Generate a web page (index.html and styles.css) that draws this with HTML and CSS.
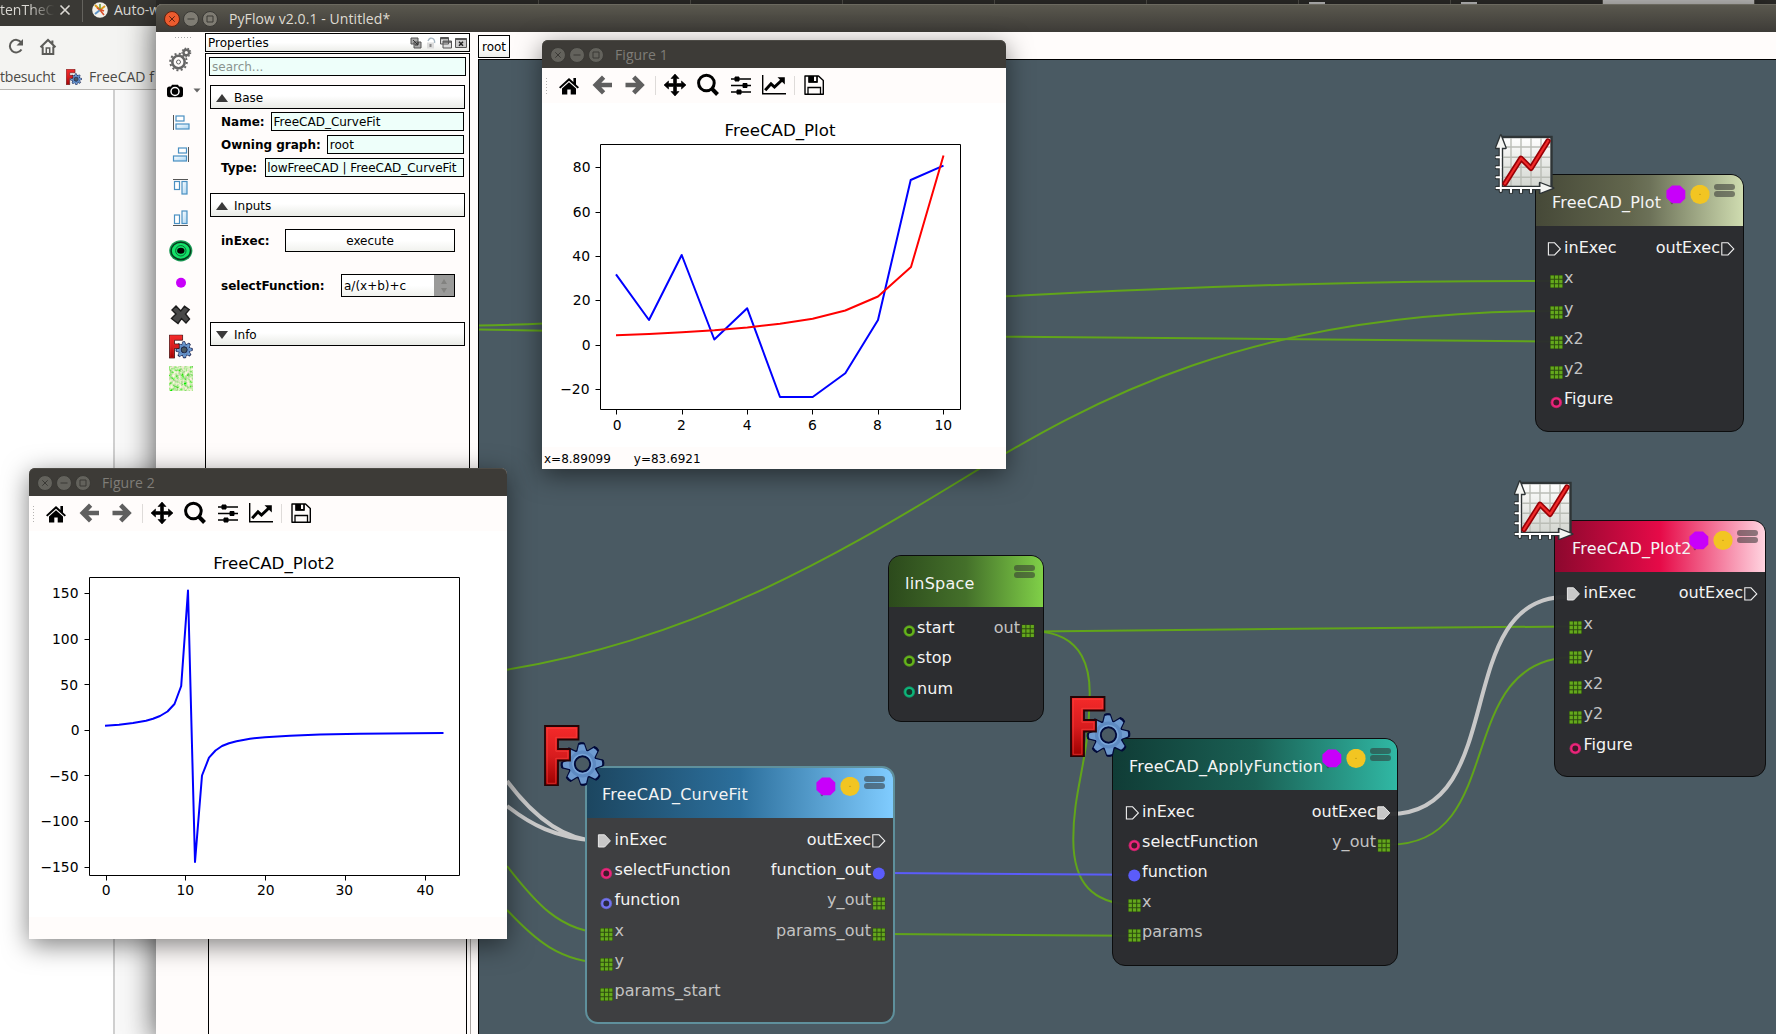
FILE: index.html
```html
<!DOCTYPE html>
<html lang="en">
<head>
<meta charset="utf-8">
<title>PyFlow v2.0.1 - Untitled*</title>
<link rel="stylesheet" href="styles.css">
</head>
<body>
<svg class="defs" width="0" height="0" aria-hidden="true">
  <defs>
    <linearGradient id="redF" x1="0" y1="0" x2="0" y2="1"><stop offset="0" stop-color="#f52a2a"/><stop offset=".5" stop-color="#d81c1e"/><stop offset="1" stop-color="#9c0000"/></linearGradient>
    <linearGradient id="paper" x1="0" y1="0" x2="0" y2="1"><stop offset="0" stop-color="#fff"/><stop offset="1" stop-color="#d2d5cf"/></linearGradient>
    <linearGradient id="bar" x1="0" y1="0" x2="1" y2="1"><stop offset="0" stop-color="#fff"/><stop offset="1" stop-color="#a8d4f2"/></linearGradient>
    <filter id="speckle" x="0" y="0" width="1" height="1">
      <feTurbulence type="fractalNoise" baseFrequency=".35" numOctaves="2" seed="4"/>
      <feColorMatrix values="1.9 0 0 0 -.4  .3 .5 0 0 .42  1.5 0 0 0 -.35  0 0 0 0 1"/>
    </filter>
    <g id="tooth"><path d="M-6-12-3-22.3Q0-23.3 3-22.3L6-12Z"/></g>
    <g id="teeth"><use href="#tooth"/><use href="#tooth" transform="rotate(45)"/><use href="#tooth" transform="rotate(90)"/><use href="#tooth" transform="rotate(135)"/><use href="#tooth" transform="rotate(180)"/><use href="#tooth" transform="rotate(225)"/><use href="#tooth" transform="rotate(270)"/><use href="#tooth" transform="rotate(315)"/></g>
    <symbol id="freecad" viewBox="0 0 61 61">
      <g transform="translate(38.5 39) rotate(-3) scale(.94)">
        <use href="#teeth" fill="#00093a" stroke="#00093a" stroke-width="1"/>
        <circle r="11.8" fill="none" stroke="#00093a" stroke-width="8.5"/>
        <use href="#teeth" fill="#6f9bd0" transform="scale(.92)"/>
        <circle r="11.6" fill="none" stroke="#5e8ac2" stroke-width="5.6"/>
        <circle r="10.2" fill="none" stroke="#7ba6d8" stroke-width="1.5"/>
        <circle r="8.1" fill="#4a5a63" stroke="#00093a" stroke-width="1.8"/>
      </g>
      <path d="M1 1H34.5V14.5H14V24H26V35.5H14V60.5H1Z" fill="url(#redF)" stroke="#250406" stroke-width="1.8"/>
      <path d="M3.2 3.2H32.3V12.3H11.8V26.2H23.8V33.3H11.8V58.3H3.2Z" fill="none" stroke="#ff4a46" stroke-opacity=".55" stroke-width="1"/>
    </symbol>
    <symbol id="chart" viewBox="0 0 60 60">
      <rect x="7" y="3" width="49.5" height="51" fill="url(#paper)" stroke="#2e3436" stroke-width="2.4"/>
      <path d="M16 4V53M26 4V53M36 4V53M46 4V53M8 13H55M8 23.3H55M8 33.3H55M8 43.3H55" stroke="#babdb6" stroke-width="1.4"/>
      <g fill="none" stroke-linecap="round">
        <path d="M5.8 57V12M1.5 54H46M1.5 23.3H6M1.5 33.3H6M1.5 43.3H6M16 54V58.2M26 54V58.2M36 54V58.2" stroke="#2e3436" stroke-width="4.4"/>
        <path d="M5.8 1.3 1 14H10.6ZM58.3 54 45 49V59Z" fill="#2e3436" stroke="#2e3436" stroke-width="2.4" stroke-linejoin="round"/>
        <path d="M5.8 57V12M1.5 54H46M1.5 23.3H6M1.5 33.3H6M1.5 43.3H6M16 54V58.2M26 54V58.2M36 54V58.2" stroke="#fff" stroke-width="2"/>
      </g>
      <path d="M5.8 2 1.2 13.8H10.4ZM57.5 54 45.500 49.300V58.700Z" fill="#f4f5f2"/>
      <path d="M10 49.5 26 24.3 36 34.3 53 7" fill="none" stroke="#980006" stroke-width="5.4" stroke-linejoin="round" stroke-linecap="round"/>
      <path d="M10 49.5 26 24.3 36 34.3 53 7" fill="none" stroke="#ef2929" stroke-width="2.2" stroke-linejoin="round" stroke-linecap="round"/>
    </symbol>
    <g id="exec"><path d="M1.4 9.8H7.6L13.4 15.9 7.6 22H1.4Z"/></g>
    <g id="array"><rect x="3" y="12.1" width="12.8" height="12.8" fill="#2c4a10"/><path d="M3.6 14.2H15.4M3.6 18.5H15.4M3.6 22.8H15.4" stroke="#64a81c" stroke-width="3.3" stroke-dasharray="3.3 1"/></g>
    <g id="ring"><circle cx="9.3" cy="18.5" r="5.8" fill="currentColor" opacity=".72"/><circle cx="9.3" cy="18.5" r="3.9" fill="#151515" fill-opacity=".75" stroke="currentColor" stroke-width="1.9"/></g>
    <g id="dot"><circle cx="9.3" cy="18.5" r="6" fill="#5b5cfa"/></g>
    <symbol id="tools" viewBox="0 0 69 20">
      <path d="M6 .4H14L19.3 5.4V13.4L14.5 18.3H6L.4 13V5.4Z" fill="#c800fa"/>
      <path d="M4 17.5 6 19.5 7 18Z" fill="#333" opacity=".6"/>
      <circle cx="34" cy="9.4" r="9.6" fill="#f2c522"/><circle cx="34" cy="9.3" r=".6" fill="#a98712"/>
    </symbol>
    <g id="wb-close"><circle cx="8" cy="8" r="7.5"/><path d="M5.3 5.3 10.7 10.7M10.7 5.3 5.3 10.7"/></g>
    <g id="wb-min"><circle cx="8" cy="8" r="7.5"/><path d="M4.5 8H11.5"/></g>
    <g id="wb-max"><circle cx="8" cy="8" r="7.5"/><path d="M5 5H11V11H5Z"/></g>
    <symbol id="i-home" viewBox="0 0 24 24"><path d="M12 5 2 14.2 3.4 15.6 12 7.8 20.6 15.6 22 14.2 19 11.4V5H16.4V9ZM12 9.3 5 15.6V21.5H10.3V16.5H13.7V21.5H19V15.6Z"/></symbol>
    <symbol id="i-back" viewBox="0 0 24 24"><path d="M22 12H6M13.6 4.2 5.8 12 13.6 19.8" fill="none" stroke="#5f5f5f" stroke-width="4.6"/></symbol>
    <symbol id="i-fwd" viewBox="0 0 24 24"><path d="M2.500 12H18.500M10.700 4.2 18.500 12 10.700 19.8" fill="none" stroke="#5f5f5f" stroke-width="4.6"/></symbol>
    <symbol id="i-move" viewBox="0 0 24 24"><path d="M12 1 16 5.5H13.5V10.5H18.5V8L23 12 18.5 16V13.5H13.5V18.5H16L12 23 8 18.5H10.5V13.5H5.5V16L1 12 5.5 8V10.5H10.5V5.5H8Z" stroke="#000" stroke-width=".6"/></symbol>
    <symbol id="i-zoom" viewBox="0 0 24 24"><circle cx="10.4" cy="10" r="7.8" fill="none" stroke="#000" stroke-width="3"/><path d="M15.6 15.4 21.5 21.5" stroke="#000" stroke-width="4"/></symbol>
    <symbol id="i-sliders" viewBox="0 0 24 24"><path d="M2 6H22M2 12.5H22M2 19H22" stroke="#000" stroke-width="1.5"/><path d="M6 4H10V8H6ZM14 10.5H18V14.5H14ZM8 17H12V21H8Z" stroke="#000"/></symbol>
    <symbol id="i-graph" viewBox="0 0 24 24"><path d="M.7 2V20.8H24" fill="none" stroke="#000" stroke-width="1.4"/><path d="M3.2 17.2 9 10.8 12.5 14 20 7" fill="none" stroke="#000" stroke-width="3"/><path d="M15.5 4.3H22.8V11.5Z"/></symbol>
    <symbol id="i-save" viewBox="0 0 24 24"><path d="M3 3H16.5L21.3 7.5V21.2H3Z" fill="none" stroke="#000" stroke-width="1.4" stroke-linejoin="round"/><path d="M6 21V14.5H18.5V21M7 3V9.2H15V3" fill="none" stroke="#000" stroke-width="1.3"/><path d="M6.5 3H12V9.5H6.5ZM14.5 3H15.6V9.5H12V8H14.5Z"/></symbol>
  </defs>
</svg>

<div class="desktop">
  <!-- web browser in the background -->
  <section class="browser">
    <div class="tabs">
      <span class="tab-text fade">tenTheC</span>
      <svg class="tab-x" width="12" height="12"><path d="M1.5 1.5 10.5 10.5M10.5 1.5 1.5 10.5" stroke="#dcdad5" stroke-width="1.6"/></svg>
      <i class="tab-sep"></i>
      <svg class="favicon" width="16" height="16"><circle cx="8" cy="8" r="7.8" fill="#f2f0ea"/><path d="M8 8 3 3M8 8 13 4" stroke="#d99a1c" stroke-width="2"/><path d="M8 8 3 12" stroke="#5d94c8" stroke-width="2"/><path d="M8 8 12 13M5 6 12 9" stroke="#d8502d" stroke-width="1.6"/><path d="M8 2V7" stroke="#6a9d3c" stroke-width="1.6"/></svg>
      <span class="tab-text">Auto-w</span>
    </div>
    <div class="nav">
      <svg width="20" height="20"><path d="M14.300 5.500A6.300 6.300 0 1 0 14.500 12.500" fill="none" stroke="#5b5b58" stroke-width="2"/><path d="M16 2V8.500H9.500Z" fill="#5b5b58"/></svg>
      <svg width="18" height="18"><path d="M1.5 9.2 9 2 16.5 9.2M3.7 8.5V16H14.3V8.5M13.4 6V2.5" fill="none" stroke="#5b5b58" stroke-width="2"/><path d="M7.3 15V10H10.7V15" fill="none" stroke="#5b5b58" stroke-width="1.5"/></svg>
    </div>
    <div class="bookmarks"><span>tbesucht</span><svg width="16" height="16"><use href="#freecad" width="16" height="16"/></svg><span>FreeCAD f</span></div>
    <div class="page"><div class="page-side"></div></div>
  </section>
  <div class="tab-strip">
    <i class="slot"></i><i class="slot"></i><i class="slot"></i><i class="slot"></i><i class="slot"></i><i class="slot"></i><i class="slot fav"></i><i class="slot fav"></i><i class="slot active"></i><i class="slot"></i>
  </div>

  <!-- PyFlow main window -->
  <section class="window main">
    <header class="titlebar">
      <svg class="wb hot" width="16" height="16"><use href="#wb-close"/></svg><svg class="wb" width="16" height="16"><use href="#wb-min"/></svg><svg class="wb" width="16" height="16"><use href="#wb-max"/></svg>
      <span class="caption">PyFlow v2.0.1 - Untitled*</span>
    </header>
    <div class="workspace">
      <nav class="toolbox">
        <i class="grip"></i>
        <svg viewBox="0 0 49 32"><g fill="none" stroke="#666"><circle cx="22.5" cy="19" r="6.2" stroke-width="2.6"/><circle cx="22.5" cy="19" r="8.3" stroke-width="2" stroke-dasharray="2 2.35"/><circle cx="22.5" cy="19" r="2"/><circle cx="30.3" cy="9.5" r="2.8" stroke-width="2.4"/><circle cx="30.3" cy="9.5" r="4.3" stroke-width="1.4" stroke-dasharray="1.5 1.5"/></g></svg>
        <svg viewBox="0 0 49 32"><path d="M13.5 11.5H15L16 9.7H22L23 11.5H24.5Q27 11.5 27 14V20Q27 22.3 24.5 22.3H13.5Q11 22.3 11 20V14Q11 11.5 13.5 11.5Z"/><circle cx="19" cy="16.5" r="4" stroke="#fff" stroke-width="1.5"/><path d="M37.5 13.5H44.5L41 17.5Z" fill="#666"/></svg>
        <svg viewBox="0 0 49 32"><path d="M17.5 8V23" stroke="#555"/><g stroke="#4a90c2" stroke-width="1.2"><rect x="20" y="9" width="8" height="5" fill="#fff"/><rect x="20" y="17" width="13" height="5" fill="url(#bar)"/></g></svg>
        <svg viewBox="0 0 49 32"><path d="M32.5 8V23" stroke="#555"/><g stroke="#4a90c2" stroke-width="1.2"><rect x="22.5" y="9" width="8" height="5" fill="#fff"/><rect x="17.5" y="17" width="13" height="5" fill="url(#bar)"/></g></svg>
        <svg viewBox="0 0 49 32"><path d="M17 8.5H32" stroke="#555"/><g stroke="#4a90c2" stroke-width="1.2"><rect x="18.5" y="10.5" width="5" height="8" fill="#fff"/><rect x="26" y="10.5" width="5" height="12.5" fill="url(#bar)"/></g></svg>
        <svg viewBox="0 0 49 32"><path d="M17 22.5H32" stroke="#555"/><g stroke="#4a90c2" stroke-width="1.2"><rect x="18.5" y="12" width="5" height="8.5" fill="#fff"/><rect x="26" y="8" width="5" height="12.5" fill="url(#bar)"/></g></svg>
        <svg viewBox="0 0 49 32"><ellipse cx="24.8" cy="15.8" rx="11.6" ry="10.6" fill="#1b9c56"/><ellipse cx="24.8" cy="15.8" rx="9.7" ry="8.6" fill="#12e268" stroke="#063a1c" stroke-width="1.5"/><circle cx="24.8" cy="15.8" r="5.2" fill="none" stroke="#0b6b35"/><ellipse cx="24.8" cy="15.8" rx="3.7" ry="3"/></svg>
        <svg viewBox="0 0 49 32"><circle cx="25" cy="15.8" r="5" fill="#c800fa"/></svg>
        <svg viewBox="0 0 49 32"><path d="M20 7 24.8 12 28.5 7.2 33.2 10.7 29.5 15 33.5 20 30 24 25.5 19.5 22 24.5 15.5 19.5 20 15 16 11Z" fill="#484848" stroke="#1c1c1c" stroke-width="1.4"/></svg>
        <svg viewBox="0 0 49 32"><use href="#freecad" x="13" y="3.5" width="24" height="24"/></svg>
        <svg viewBox="0 0 49 32"><rect x="13" y="3.5" width="24" height="24" filter="url(#speckle)"/></svg>
      </nav>
      <aside class="dock">
        <div class="dock-title"><span>Properties</span>
          <svg width="12" height="12"><path d="M1 1H8V7H1ZM4 5H11V11H4Z" fill="#aaa" stroke="#555"/><path d="M3 3 8 8M8 5V8H5" stroke="#333" fill="none"/></svg>
          <svg width="12" height="12"><rect x="2" y="5.5" width="7" height="6" fill="#dcdcdc"/><path d="M3 4Q5-.5 8.5 2Q10 3.5 9.5 6" fill="none" stroke="#a9b9c4" stroke-width="1.4"/><path d="M5.5 7V10" stroke="#888" stroke-width="2"/></svg>
          <svg width="12" height="12"><path d="M.5 .5H8.5V7H.5ZM3 4H11.5V11H3Z" fill="#ddd" stroke="#555"/><path d="M.5 1.5H8.5M3 5H11.5" stroke="#555" stroke-width="1.5"/></svg>
          <svg width="12" height="12"><path d="M.5 1.5H11.5V10.5H.5Z" fill="#ccc" stroke="#555"/><path d="M.5 2H11.5" stroke="#555" stroke-width="2"/><path d="M4 4.8 8 8.8M8 4.8 4 8.8" stroke="#222" stroke-width="1.5"/></svg>
        </div>
        <div class="props">
          <div class="field search">search...</div>
          <div class="group g-base"><i class="up"></i>Base</div>
          <div class="form">
            <div class="row"><b>Name:</b><div class="field">FreeCAD_CurveFit</div></div>
            <div class="row"><b>Owning graph:</b><div class="field">root</div></div>
            <div class="row type"><b>Type:</b><div class="field">lowFreeCAD | FreeCAD_CurveFit</div></div>
          </div>
          <div class="group g-inputs"><i class="up"></i>Inputs</div>
          <div class="form wide">
            <div class="row tall"><b class="w1">inExec:</b><div class="button">execute</div></div>
            <div class="row tall"><b class="w2">selectFunction:</b><div class="combo"><span>a/(x+b)+c</span><i><em class="up"></em><em class="down"></em></i></div></div>
          </div>
          <div class="group g-info"><i class="down"></i>Info</div>
        </div>
        <div class="dock-foot"></div>
      </aside>
      <div class="graph">
        <div class="crumbs"><span>root</span></div>
        <div class="canvas">
          <svg class="wires" viewBox="479 60 1297 974">
            <g fill="none" stroke="#61a51a" stroke-width="2">
              <path d="M479 325.5C600 323.5 760 309 1006 296.3S1400 281 1552 281"/>
              <path d="M479 329.5C650 332 830 336 1006 336.7S1400 341.5 1552 341.5"/>
              <path d="M507 669.7C690 640 830 560 961 480S1250 311 1552 311"/>
              <path d="M1036 631.5C1200 630.5 1400 627 1570 626.5"/>
              <path d="M1036 631.5C1085 633 1091 672 1089.5 700C1089 760 1073 790 1073.3 840C1073.5 885 1094 902 1130 905"/>
              <path d="M886 934 1130 935.7"/>
              <path d="M1390 844.5C1510 844.5 1450 657 1575 657"/>
              <path d="M507 866C535 902 560 932 605 933M507 910C535 940 560 962 605 963"/>
            </g>
            <path d="M886 873 1130 874.7" stroke="#5b5cfa" stroke-width="2"/>
            <g fill="none" stroke="#c8c8c8" stroke-width="4">
              <path d="M1390 814C1510 814 1450 597 1566 597"/>
              <path d="M507 781C530 812 560 840 598 841M507 806C530 824 555 838 598 841"/>
            </g>
          </svg>

          <article class="node plot">
            <svg class="badge chart"><use href="#chart"/></svg>
            <header><span>FreeCAD_Plot</span><svg class="tools"><use href="#tools"/></svg><i class="bars"></i></header>
            <ul>
              <li><svg class="pin open"><use href="#exec"/></svg><span>inExec</span><span class="out">outExec</span><svg class="pin open"><use href="#exec" x=".4"/></svg></li>
              <li class="dim"><svg class="pin"><use href="#array"/></svg><span>x</span></li>
              <li class="dim"><svg class="pin"><use href="#array"/></svg><span>y</span></li>
              <li class="dim"><svg class="pin"><use href="#array"/></svg><span>x2</span></li>
              <li class="dim"><svg class="pin"><use href="#array"/></svg><span>y2</span></li>
              <li><svg class="pin pink"><use href="#ring"/></svg><span>Figure</span></li>
            </ul>
          </article>

          <article class="node plot2">
            <svg class="badge chart"><use href="#chart"/></svg>
            <header><span>FreeCAD_Plot2</span><svg class="tools"><use href="#tools"/></svg><i class="bars"></i></header>
            <ul>
              <li><svg class="pin full"><use href="#exec"/></svg><span>inExec</span><span class="out">outExec</span><svg class="pin open"><use href="#exec" x=".4"/></svg></li>
              <li class="dim"><svg class="pin"><use href="#array"/></svg><span>x</span></li>
              <li class="dim"><svg class="pin"><use href="#array"/></svg><span>y</span></li>
              <li class="dim"><svg class="pin"><use href="#array"/></svg><span>x2</span></li>
              <li class="dim"><svg class="pin"><use href="#array"/></svg><span>y2</span></li>
              <li><svg class="pin pink"><use href="#ring"/></svg><span>Figure</span></li>
            </ul>
          </article>

          <article class="node linspace">
            <header><span>linSpace</span><i class="bars"></i></header>
            <ul>
              <li><svg class="pin lime"><use href="#ring"/></svg><span>start</span><span class="out dim">out</span><svg class="pin"><use href="#array" x="-1.5"/></svg></li>
              <li><svg class="pin lime"><use href="#ring"/></svg><span>stop</span></li>
              <li><svg class="pin teal"><use href="#ring"/></svg><span>num</span></li>
            </ul>
          </article>

          <article class="node apply">
            <svg class="badge free"><use href="#freecad"/></svg>
            <header><span>FreeCAD_ApplyFunction</span><svg class="tools"><use href="#tools"/></svg><i class="bars"></i></header>
            <ul>
              <li><svg class="pin open"><use href="#exec"/></svg><span>inExec</span><span class="out">outExec</span><svg class="pin full"><use href="#exec" x=".4"/></svg></li>
              <li><svg class="pin pink"><use href="#ring"/></svg><span>selectFunction</span><span class="out dim">y_out</span><svg class="pin"><use href="#array" x="-1.5"/></svg></li>
              <li><svg class="pin"><use href="#dot"/></svg><span>function</span></li>
              <li class="dim"><svg class="pin"><use href="#array"/></svg><span>x</span></li>
              <li class="dim"><svg class="pin"><use href="#array"/></svg><span>params</span></li>
            </ul>
          </article>

          <article class="node curvefit">
            <svg class="badge free"><use href="#freecad"/></svg>
            <header><span>FreeCAD_CurveFit</span><svg class="tools"><use href="#tools"/></svg><i class="bars"></i></header>
            <ul>
              <li><svg class="pin full"><use href="#exec"/></svg><span>inExec</span><span class="out">outExec</span><svg class="pin open"><use href="#exec" x=".4"/></svg></li>
              <li><svg class="pin pink"><use href="#ring"/></svg><span>selectFunction</span><span class="out">function_out</span><svg class="pin"><use href="#dot" x="-1.5"/></svg></li>
              <li><svg class="pin blue"><use href="#ring"/></svg><span>function</span><span class="out dim">y_out</span><svg class="pin"><use href="#array" x="-1.5"/></svg></li>
              <li class="dim"><svg class="pin"><use href="#array"/></svg><span>x</span><span class="out">params_out</span><svg class="pin"><use href="#array" x="-1.5"/></svg></li>
              <li class="dim"><svg class="pin"><use href="#array"/></svg><span>y</span></li>
              <li class="dim"><svg class="pin"><use href="#array"/></svg><span>params_start</span></li>
            </ul>
          </article>
        </div>
      </div>
    </div>
  </section>

  <!-- Figure 1 -->
  <section class="window figure fig1">
    <header class="titlebar">
      <svg class="wb" width="16" height="16"><use href="#wb-close"/></svg><svg class="wb" width="16" height="16"><use href="#wb-min"/></svg><svg class="wb" width="16" height="16"><use href="#wb-max"/></svg>
      <span class="caption">Figure 1</span>
    </header>
    <div class="mpl-tools"><i class="grip"></i><svg><use href="#i-home"/></svg><svg><use href="#i-back"/></svg><svg><use href="#i-fwd"/></svg><i class="sep"></i><svg><use href="#i-move"/></svg><svg><use href="#i-zoom"/></svg><svg><use href="#i-sliders"/></svg><svg><use href="#i-graph"/></svg><i class="sep"></i><svg><use href="#i-save"/></svg></div>
    <svg class="plot-area" viewBox="542 103 464 344">
      <text class="title" x="780" y="136" text-anchor="middle">FreeCAD_Plot</text>
      <path class="axis" d="M600.5 144.5H960.5V409.5H600.5ZM595.5 167.5H600M595.5 212.5H600M595.5 256.5H600M595.5 300.5H600M595.5 345.5H600M595.5 389.5H600M616.5 410V414.5M682.5 410V414.5M747.5 410V414.5M812.5 410V414.5M878.5 410V414.5M943.5 410V414.5"/>
      <g text-anchor="end"><text x="590.5" y="172.4">80</text><text x="590.5" y="216.8">60</text><text x="590" y="261">40</text><text x="590.5" y="305.2">20</text><text x="590.5" y="350">0</text><text x="589.5" y="394.4">−20</text></g>
      <g text-anchor="middle"><text x="617.2" y="429.8">0</text><text x="681.3" y="429.8">2</text><text x="747.2" y="429.8">4</text><text x="812.3" y="429.8">6</text><text x="877.3" y="429.8">8</text><text x="943.3" y="429.8">10</text></g>
      <polyline class="blue-line" points="616,274.3 649,320 681.7,255 714.3,339.5 747.2,308.3 780,397 812.7,397 845.3,373.3 878,320 910.7,180 943.5,165.7"/>
      <polyline class="red-line" points="616,335.2 649,334 682,332.3 714.5,330.3 747.3,327.5 780,323.7 812.7,318.7 845.3,310.5 878,296.5 911,267 943.5,155.5"/>
    </svg>
    <footer class="status"><span>x=8.89099</span><span>y=83.6921</span></footer>
  </section>

  <!-- Figure 2 -->
  <section class="window figure fig2">
    <header class="titlebar">
      <svg class="wb" width="16" height="16"><use href="#wb-close"/></svg><svg class="wb" width="16" height="16"><use href="#wb-min"/></svg><svg class="wb" width="16" height="16"><use href="#wb-max"/></svg>
      <span class="caption">Figure 2</span>
    </header>
    <div class="mpl-tools"><i class="grip"></i><svg><use href="#i-home"/></svg><svg><use href="#i-back"/></svg><svg><use href="#i-fwd"/></svg><i class="sep"></i><svg><use href="#i-move"/></svg><svg><use href="#i-zoom"/></svg><svg><use href="#i-sliders"/></svg><svg><use href="#i-graph"/></svg><i class="sep"></i><svg><use href="#i-save"/></svg></div>
    <svg class="plot-area" viewBox="29 531 478 386">
      <text class="title" x="274" y="569" text-anchor="middle">FreeCAD_Plot2</text>
      <path class="axis" d="M89.5 577.5H459.5V875.5H89.5ZM84.5 593.5H89M84.5 639.5H89M84.5 684.5H89M84.5 730.5H89M84.5 775.5H89M84.5 821.5H89M84.5 867.5H89M106.5 876V880.5M185.5 876V880.5M265.5 876V880.5M345.5 876V880.5M425.5 876V880.5"/>
      <g text-anchor="end"><text x="78.5" y="598">150</text><text x="78.5" y="644">100</text><text x="78" y="689.5">50</text><text x="79.5" y="735">0</text><text x="78.5" y="780.6">−50</text><text x="78.5" y="826">−100</text><text x="78.5" y="872">−150</text></g>
      <g text-anchor="middle"><text x="106.2" y="894.8">0</text><text x="185.3" y="894.8">10</text><text x="265.8" y="894.8">20</text><text x="344.3" y="894.8">30</text><text x="425.3" y="894.8">40</text></g>
      <polyline class="blue-line" points="105,725.7 119,724.7 133,723 146,720.7 153,718.7 160,716 167.5,711.5 174.5,704 181.2,686 188,590.5 195,862 202,775.5 209,757.7 215.5,750.5 222,746 229,743.2 236.5,741.2 250,738.7 265,737.2 290,735.7 320,734.6 360,733.8 443.5,733"/>
    </svg>
    <footer class="status"></footer>
  </section>
</div>
</body>
</html>
```
FILE: styles.css
```css
* { box-sizing: border-box; }

body {
  margin: 0;
  overflow: hidden;
  font: 12px/18px "DejaVu Sans", sans-serif;
  color: #000;
}

svg { display: block; flex: none; }
svg.defs { position: absolute; }
ul { list-style: none; margin: 0; padding: 0; }

.desktop {
  position: relative;
  width: 1776px;
  height: 1034px;
  overflow: hidden;
  background: #fff;
}

/* ---------- browser behind the windows ---------- */
.browser {
  width: 480px;
  height: 1034px;
  display: flex;
  flex-direction: column;
  font: 14px/18px "Open Sans", sans-serif;
}
.tabs {
  height: 26px;
  display: flex;
  align-items: center;
  padding-bottom: 6px;
  background: #3a3935;
  color: #dcdad5;
}
.tab-text.fade {
  width: 55px;
  background: linear-gradient(90deg, #dcdad5 55%, #45443f 95%);
  -webkit-background-clip: text;
  background-clip: text;
  color: transparent;
  white-space: nowrap;
}
.tab-x { margin-left: 4px; }
.tab-sep { width: 1px; height: 24px; margin-left: 11px; background: #64635e; }
.favicon { margin: 0 6px 0 9px; }
.nav {
  height: 41px;
  padding: 0 0 0 7px;
  display: flex;
  align-items: center;
  gap: 12px;
  background: #f4f4f2;
}
.bookmarks {
  height: 23px;
  display: flex;
  align-items: center;
  gap: 7px;
  padding-bottom: 2px;
  background: #f4f4f2;
  border-bottom: 1px solid #b8b6b2;
  color: #4b4a46;
  white-space: nowrap;
}
.bookmarks span:first-child { width: 54px; margin-right: 5px; letter-spacing: -.2px; }
.page { flex: 1; display: flex; }
.page-side { margin-left: 113px; flex: 1; border-left: 2px solid #cfcfcf; background: #f9f9f9; }

.tab-strip {
  position: absolute;
  left: 387px;
  top: 0;
  width: 1389px;
  height: 20px;
  background: #2d2c29;
  display: flex;
}
.tab-strip::before {
  content: "";
  position: absolute;
  left: -231px;
  width: 231px;
  height: 8px;
  background: #2d2c29;
}
.slot { width: 152px; flex: none; border-right: 1px solid #55534d; }
.slot.fav { background: linear-gradient(#c9c9c9, #c9c9c9) 10px 2px / 16px 2px no-repeat; }
.slot.active { background: #c6c5c3; }

/* ---------- windows ---------- */
.window {
  position: absolute;
  display: flex;
  flex-direction: column;
  border-radius: 6px 6px 0 0;
  background: #fffcfb;
}
.titlebar {
  height: 28px;
  flex: none;
  display: flex;
  align-items: center;
  gap: 3px;
  padding-left: 7.5px;
  padding-top: 1px;
  border-radius: 6px 6px 0 0;
  background: #3d3b37;
  font: 14px/18px "Open Sans", sans-serif;
  letter-spacing: .08px;
  color: #7f7d78;
  box-shadow: inset 0 1px #4d4b46;
}
.caption { margin-left: 8.500px; white-space: nowrap; }
.wb { fill: #63625c; stroke: #3a3935; stroke-width: 1; }

.main {
  left: 156px;
  top: 4px;
  width: 1620px;
  height: 1030px;
  border-top-right-radius: 0;
  box-shadow: 0 8px 32px rgba(0, 0, 0, .7);
}
.main > .titlebar {
  background: linear-gradient(#5b594f, #3d3b37);
  color: #dfdbd2;
  border-top-right-radius: 0;
  box-shadow: inset 0 1px #6b695f;
}
.main .wb { fill: #7f7c73; }
.main .wb.hot { fill: #ec5b2e; stroke: #5f2210; }

.figure { box-shadow: 0 6px 26px rgba(0, 0, 0, .5); }
.fig1 { left: 542px; top: 40px; width: 464px; height: 429px; }
.fig2 { left: 29px; top: 468px; width: 478px; height: 471px; }

/* ---------- main window ---------- */
.workspace { flex: 1; display: flex; min-height: 0; }
.toolbox {
  width: 49px;
  flex: none;
  padding-top: 4px;
  display: flex;
  flex-direction: column;
}
.toolbox svg { width: 49px; height: 32px; }
.toolbox .grip {
  width: 17px;
  height: 4px;
  margin: 0 0 3px 18px;
  background: radial-gradient(circle, #aaa 34%, transparent 40%) 0 0 / 3px 3px;
}
.dock { width: 273px; flex: none; padding: 1px 8px 0 0; display: flex; flex-direction: column; }
.dock-title {
  height: 19px;
  flex: none;
  margin-bottom: 1px;
  border: 1px solid #000;
  background: linear-gradient(#fff 50%, #edeeea);
  display: flex;
  align-items: center;
  gap: 3px;
  padding: 0 2px 0 2px;
}
.dock-title span { flex: 1; }
.props {
  height: 870px;
  flex: none;
  border: 1px solid #000;
  border-bottom: 0;
  padding: 3px 3px 0;
}
.dock-foot {
  flex: 1;
  margin-left: 3px;
  border: 1px solid #000;
  border-width: 0 1px;
  width: 259px;
  box-shadow: 3px 0 #fffcfb, 4px 0 #aaa5a3;
}
.field {
  height: 19px;
  border: 1px solid #000;
  background: #eefffa;
  padding: 0 2px;
  line-height: 18px;
  flex: 1;
  white-space: nowrap;
}
.search { color: #8a948f; }
.group {
  height: 24px;
  margin: 9px 1px 0;
  border: 1px solid #000;
  background: linear-gradient(#fff 45%, #e9ebe6);
  display: flex;
  align-items: center;
  gap: 6px;
  padding: 2px 0 0 5px;
}
.group.g-inputs { margin-top: 16px; }
.group.g-info { margin-top: 25px; }
.up, .down { border: 6px solid transparent; flex: none; }
i.up { border-width: 0 6px 8px; border-bottom-color: #3a3a3a; }
i.down { border-width: 8px 6px 0; border-top-color: #3a3a3a; }
.form { padding: 3px 2px 0 12px; display: flex; flex-direction: column; gap: 4px; }
.row { display: flex; align-items: center; gap: 6px; }
.row.type { gap: 8px; }
.row.type .field { padding: 0 0 0 1px; letter-spacing: -.03px; }
.form.wide { padding: 12px 11px 0 12px; gap: 22px; }
.row.tall { height: 23px; gap: 0; }
.w1 { width: 64px; }
.w2 { width: 120px; }
.button, .combo {
  flex: 1;
  height: 23px;
  border: 1px solid #000;
  background: linear-gradient(#fff 50%, #f1f2ee);
  text-align: center;
  line-height: 22px;
}
.combo { display: flex; justify-content: space-between; padding-left: 2px; }
.combo i {
  width: 20px;
  background: #9a9a99;
  display: flex;
  flex-direction: column;
  align-items: center;
  justify-content: center;
  gap: 4px;
}
em.up { border-width: 0 3px 5px; border-bottom-color: #828280; }
em.down { border-width: 5px 3px 0; border-top-color: #828280; }

.graph { flex: 1; display: flex; flex-direction: column; min-width: 0; }
.crumbs { height: 27px; flex: none; padding-top: 3px; display: flex; }
.crumbs span {
  height: 23px;
  border: 1px solid #000;
  padding: 0 3px;
  line-height: 22px;
  background: linear-gradient(#fff 50%, #edeeea);
}
.canvas {
  position: relative;
  flex: 1;
  border: 1px solid #000;
  border-width: 1px 0 0 1px;
  background: #4a5a63;
  overflow: hidden;
}
.wires { width: 1297px; height: 974px; }

/* ---------- graph nodes ---------- */
.node {
  position: absolute;
  border: 1px solid #0c0d0e;
  border-radius: 13px;
  background: rgba(43, 44, 46, .96);
  font-size: 16px;
  line-height: 30px;
  letter-spacing: .05px;
  color: #f4f4f4;
}
.node header {
  height: 51px;
  display: flex;
  align-items: flex-start;
  padding-left: 16px;
  border-radius: 12px 12px 0 0;
  letter-spacing: .22px;
}
.node header span { flex: 1; min-width: 0; white-space: nowrap; padding-top: 13px; }
.tools { width: 69px; height: 20px; margin: 10px -21px 0 0; }
.bars {
  width: 21px;
  height: 13px;
  margin: 9px 8px 0 0;
  flex: none;
  display: flex;
  flex-direction: column;
  gap: 1px;
}
.bars::before, .bars::after {
  content: "";
  height: 6px;
  border-radius: 3px;
  background: rgba(50, 50, 50, .55);
}
.node ul { padding-top: 7px; }
.node li { height: 30.1px; display: flex; padding: 0 5px 0 11px; white-space: nowrap; }
.out { margin-left: auto; }
.dim { color: #c3c3c3; }
.pin { width: 18px; height: 30px; overflow: visible; }
.pin + span { margin-left: -.5px; }
.open { fill: none; stroke: #f0f0f0; stroke-width: 1.1; }
.full { fill: #c8c8c8; stroke: #e8e8e8; stroke-width: 1; }
.pink { color: #f0247c; }
.lime { color: #66b81a; }
.teal { color: #0cb87c; }
.blue { color: #7474f4; }
.badge { position: absolute; }
.badge.chart { width: 60px; height: 60px; left: -41px; top: -41px; }
.badge.free { width: 61px; height: 61px; left: -43px; top: -43px; }

.plot { left: 1056px; top: 114px; width: 209px; height: 258px; }
.plot header { background: linear-gradient(90deg, #464938, #62664d 45%, #6c7158 55%, #cfdcb0); }
.plot li { height: 30.3px; }
.plot li .pin + span { margin-left: -1px; }
.plot2 { left: 1075px; top: 460px; width: 212px; height: 257px; }
.plot2 header { padding-left: 17px; background: linear-gradient(90deg, #8c082e, #e60a48 50%, #ffd4e0); }
.plot2 ul { padding-top: 6.300px; }
.plot2 .bars { margin-right: 7px; }
.plot2 li { height: 30.3px; padding-right: 4px; }
.linspace { left: 409px; top: 495px; width: 156px; height: 167px; }
.linspace header { background: linear-gradient(90deg, #2c4a1c, #44702a 50%, #80d048); }
.linspace ul { padding-top: 6px; }
.linspace li { height: 30.3px; }
.linspace .pin + span { margin-left: -1px; }
.linspace .pin use { transform: translateY(-.5px); }
.apply { left: 633px; top: 678px; width: 286px; height: 228px; }
.apply header { background: linear-gradient(90deg, #103c36, #1a6054 50%, #30b8a4); }
.apply .bars { margin-right: 6px; }
.apply li { padding-right: 3px; padding-left: 11.500px; }
.curvefit {
  left: 106px;
  top: 706px;
  width: 310px;
  height: 258px;
  border: 2px solid #5f909c;
  background: #3e3f41;
}
.curvefit header { height: 50px; padding-left: 15px; background: linear-gradient(90deg, #1c4660, #2c6f9c 50%, #80ccff); border-radius: 11px 11px 0 0; }
.curvefit header span { padding-top: 12px; }
.curvefit .bars { margin-right: 8px; margin-top: 8px; }
.curvefit .tools { margin-top: 9px; }
.curvefit ul { padding-top: 7px; }
.curvefit li { padding: 0 4px 0 10px; height: 30.2px; }

/* ---------- figure windows ---------- */
.mpl-tools {
  height: 34px;
  flex: none;
  margin-bottom: 1px;
  display: flex;
  align-items: center;
  gap: 9px;
  padding-left: 3px;
}
.mpl-tools svg { width: 24px; height: 24px; }
.mpl-tools .grip {
  width: 4px;
  height: 17px;
  margin-right: -1px;
  background: radial-gradient(circle, #b5b3b1 34%, transparent 40%) 0 0 / 3px 3px;
}
.sep { width: 1px; height: 19px; margin: 0 -2px 0 -1px; background: #dedbd9; }
.plot-area { width: 100%; flex: 1; min-height: 0; background: #fff; }
.plot-area text { font-size: 13.89px; }
.plot-area .title { font-size: 16.67px; }
.axis { fill: none; stroke: #000; stroke-width: 1; }
.blue-line, .red-line { fill: none; stroke: #00f; stroke-width: 2; stroke-linejoin: round; }
.red-line { stroke: #f00; }
.status { height: 22px; flex: none; padding: 3px 2px 0; display: flex; gap: 23px; }
```
